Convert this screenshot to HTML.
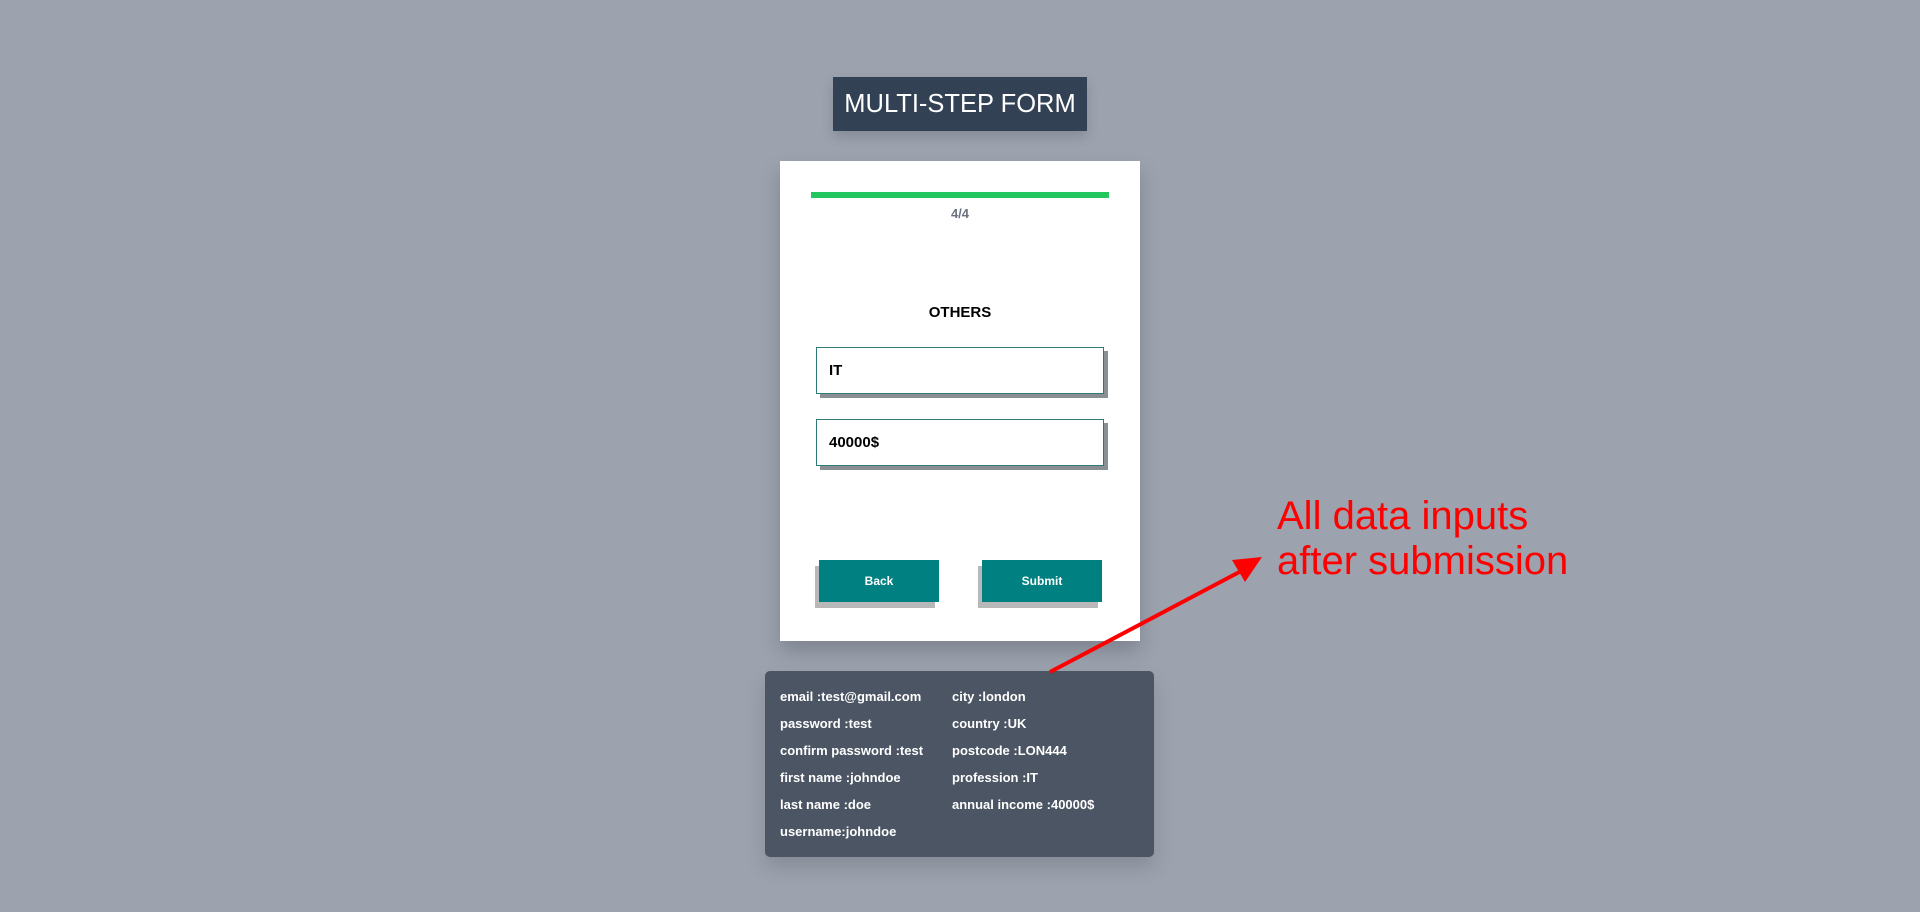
<!DOCTYPE html>
<html><head><meta charset="utf-8"><style>
*{margin:0;padding:0;box-sizing:border-box}
body{width:1920px;height:912px;background:#9ca3af;position:relative;overflow:hidden;font-family:"Liberation Sans",Arial,sans-serif}
.title{position:absolute;left:833px;top:77px;width:254px;height:54px;background:#334155;color:#fff;font-size:25.5px;line-height:54px;text-align:center;box-shadow:0 6px 12px rgba(0,0,0,.15)}
.card{position:absolute;left:780px;top:161px;width:360px;height:480px;background:#fff;box-shadow:0 10px 20px rgba(0,0,0,.2)}
.bar{position:absolute;left:31px;top:31px;width:298px;height:6px;background:#22c55e}
.step{position:absolute;left:0;width:360px;top:45px;text-align:center;font-size:13px;font-weight:bold;color:#6b7280}
.h{position:absolute;left:0;width:360px;top:143px;text-align:center;font-size:15px;font-weight:bold;color:#000}
.inp{position:absolute;left:36px;width:288px;height:47px;border:1.5px solid #2b7a78;box-shadow:4px 4px 0 #8a8f94;font-size:15px;font-weight:bold;padding-left:12px;line-height:46px;background:#fff}
.btn{position:absolute;top:399px;width:120px;height:42px;background:#008080;color:#fff;font-size:12px;font-weight:bold;text-align:center;line-height:42px;box-shadow:-4px 6px 0 #b8b8b8}
.data{position:absolute;left:765px;top:671px;width:389px;height:186px;background:#4b5563;border-radius:5px;box-shadow:0 10px 20px rgba(0,0,0,.15);color:#fff;font-size:13px;font-weight:bold}
.data div{position:absolute;white-space:nowrap}
.red{position:absolute;left:1277px;top:494px;color:#f00;font-size:40px;line-height:45px;font-family:"Liberation Sans",Arial,sans-serif}
</style></head><body>
<div class="title">MULTI-STEP FORM</div>
<div class="card">
<div class="bar"></div>
<div class="step">4/4</div>
<div class="h">OTHERS</div>
<div class="inp" style="top:186px">IT</div>
<div class="inp" style="top:258px">40000$</div>
<div class="btn" style="left:39px">Back</div>
<div class="btn" style="left:202px">Submit</div>
</div>
<div class="data">
<div style="left:15px;top:18px">email :test@gmail.com</div>
<div style="left:15px;top:45px">password :test</div>
<div style="left:15px;top:72px">confirm password :test</div>
<div style="left:15px;top:99px">first name :johndoe</div>
<div style="left:15px;top:126px">last name :doe</div>
<div style="left:15px;top:153px">username:johndoe</div>
<div style="left:187px;top:18px">city :london</div>
<div style="left:187px;top:45px">country :UK</div>
<div style="left:187px;top:72px">postcode :LON444</div>
<div style="left:187px;top:99px">profession :IT</div>
<div style="left:187px;top:126px">annual income :40000$</div>
</div>
<svg style="position:absolute;left:0;top:0" width="1920" height="912">
<line x1="1050" y1="672" x2="1245" y2="569" stroke="#f00" stroke-width="4"/>
<polygon points="1262,557 1232,560 1245,582" fill="#f00"/>
</svg>
<div class="red">All data inputs<br>after submission</div>
</body></html>
